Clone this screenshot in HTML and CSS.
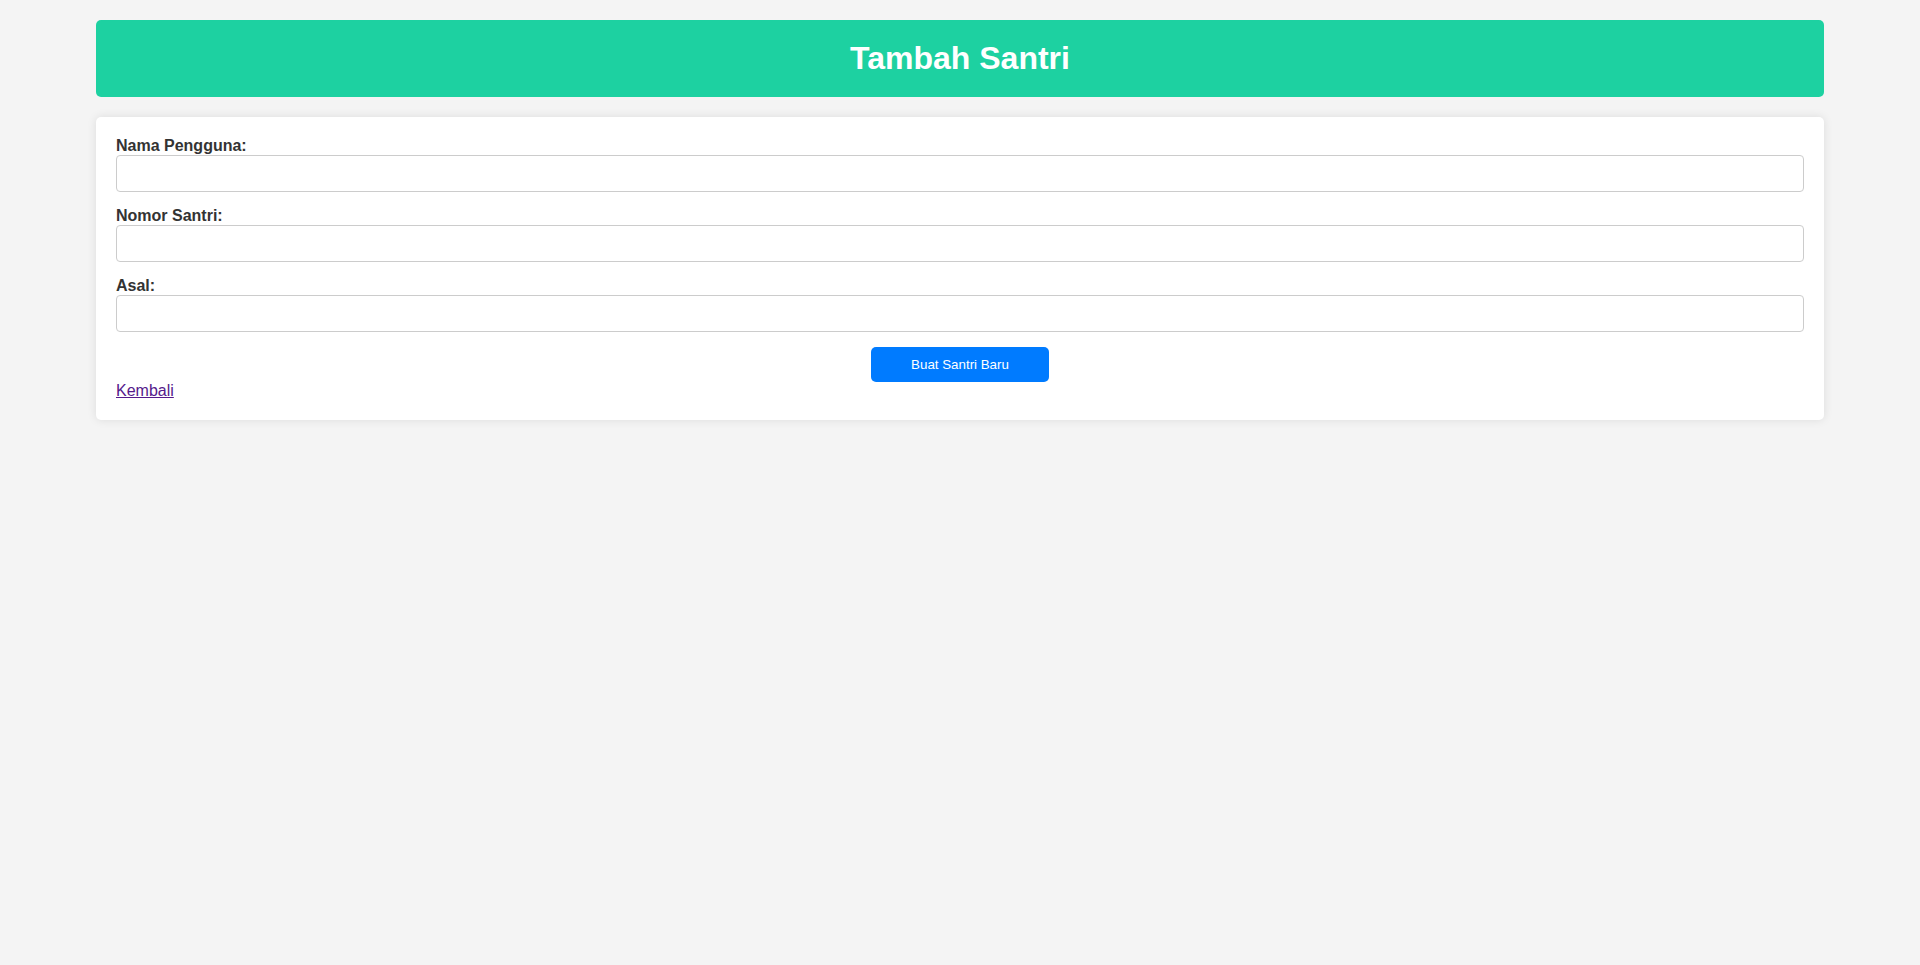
FILE: index.html
```html
<!DOCTYPE html>
<html lang="id">
<head>
<meta charset="utf-8">
<title>Tambah Santri</title>
<link rel="stylesheet" href="styles.css">
</head>
<body>
<div class="container">
  <header class="header">
    <h1>Tambah Santri</h1>
  </header>
  <div class="card">
    <form class="form">
      <label for="nama">Nama Pengguna:</label>
      <input type="text" id="nama" class="input">
      <label for="nomor">Nomor Santri:</label>
      <input type="text" id="nomor" class="input">
      <label for="asal">Asal:</label>
      <input type="text" id="asal" class="input">
      <button type="button" class="btn">Buat Santri Baru</button>
    </form>
    <a href="#" class="back">Kembali</a>
  </div>
</div>
</body>
</html>
```

FILE: styles.css
```css
html, body {
  margin: 0;
  padding: 0;
  background: #f4f4f4;
  font-family: "Liberation Sans", Arial, sans-serif;
  font-size: 16px;
  color: #333;
}

.container {
  width: 90%;
  margin: 20px auto;
}

.header {
  background: #1dd1a1;
  color: #fff;
  padding: 20px;
  border-radius: 5px;
  text-align: center;
  margin-bottom: 20px;
}

.header h1 {
  margin: 0;
  font-size: 32px;
  line-height: 37px;
  font-weight: bold;
}

.card {
  background: #fff;
  padding: 20px;
  border-radius: 5px;
  box-shadow: 0 0 10px rgba(0, 0, 0, 0.1);
  line-height: 18px;
}

.form label {
  display: block;
  font-weight: bold;
  color: #333;
  line-height: 18px;
}

.input {
  display: block;
  width: 100%;
  height: 37px;
  box-sizing: border-box;
  padding: 8px;
  font-family: "Liberation Sans", Arial, sans-serif;
  font-size: 16px;
  line-height: 19px;
  border: 1px solid #ccc;
  border-radius: 4px;
  margin: 0 0 15px 0;
  background: #fff;
}

.btn {
  display: block;
  margin: 0 auto;
  height: 35px;
  padding: 10px 40px;
  background: #007bff;
  color: #fff;
  border: none;
  border-radius: 5px;
  font-family: "Liberation Sans", Arial, sans-serif;
  font-size: 13.333px;
  line-height: 15px;
  cursor: pointer;
}

.back {
  color: #551a8b;
  text-decoration: underline;
}
```
